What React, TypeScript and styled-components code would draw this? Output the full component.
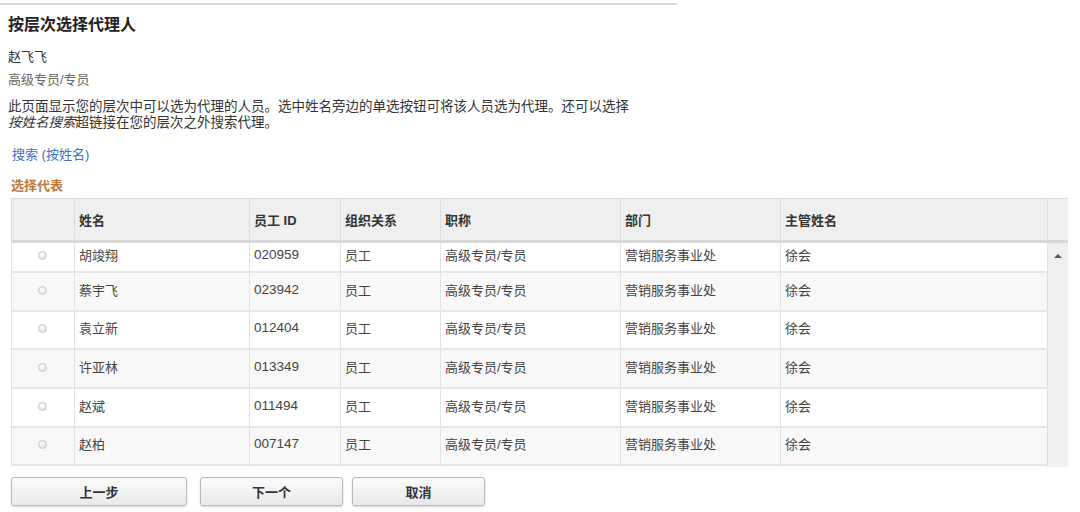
import React from "react";
import styled, { createGlobalStyle } from "styled-components";

const Global = createGlobalStyle`
  html, body { margin: 0; padding: 0; background: #fff; }
  body {
    font-family: "Liberation Sans", Arial, "Noto Sans CJK SC", sans-serif;
    color: #333;
    font-size: 13px;
  }
`;

const Page = styled.div`
  width: 1080px;
  height: 512px;
  overflow: hidden;
`;

const TopRule = styled.div`
  width: 677px;
  height: 2px;
  margin-top: 3px;
  background: #d9d9d9;
`;

const Content = styled.div`
  padding: 0 0 0 8px;
`;

const Title = styled.h1`
  margin: 10px 0 0 0;
  font-size: 16px;
  font-weight: bold;
  color: #222;
  line-height: 20px;
`;

const Line = styled.div<{ $gray?: boolean; $mt: number }>`
  margin-top: ${(p) => p.$mt}px;
  font-size: 13px;
  line-height: 16px;
  color: ${(p) => (p.$gray ? "#666" : "#333")};
`;

const Para = styled.p`
  margin: 11px 0 0 0;
  font-size: 13.5px;
  line-height: 16px;
  color: #333;
`;

const Em = styled.i`
  font-style: italic;
  font-weight: normal;
`;

const Link = styled.a`
  display: inline-block;
  margin: 16px 0 0 4px;
  font-size: 13px;
  line-height: 16px;
  color: #3f6fc6;
  text-decoration: none;
`;

const Legend = styled.div`
  margin: 16px 0 0 3px;
  font-size: 13px;
  font-weight: bold;
  line-height: 14px;
  color: #c0763a;
`;

const GridWrap = styled.div`
  margin: 5px 0 0 3px;
  width: 1057px;
  height: 269px;
  overflow: hidden;
`;

const Table = styled.table`
  border-collapse: collapse;
  table-layout: fixed;
  width: 1057px;
`;

const Th = styled.th`
  height: 41px;
  padding: 0 0 0 4px;
  text-align: left;
  font-size: 13px;
  font-weight: bold;
  color: #333;
  background: #efefef;
  border: 1px solid #dcdcdc;
  border-bottom: 3px solid #d6d6d6;
`;

const Tr = styled.tr<{ $alt: boolean; $h: number }>`
  height: ${(p) => p.$h}px;
  background: ${(p) => (p.$alt ? "#f8f8f8" : "#fff")};
`;

const Td = styled.td<{ $num?: boolean }>`
  padding: 0 0 4px 4px;
  font-size: ${(p) => (p.$num ? "13.5px" : "13px")};
  color: #444;
  border: 1px solid #e2e2e2;
  border-top: 2px solid #e6e6e6;
  white-space: nowrap;
  overflow: hidden;
`;

const RadioCell = styled(Td)`
  padding: 0 0 4px 0;
  text-align: center;
`;

const Radio = styled.span`
  display: inline-block;
  width: 7px;
  height: 7px;
  border-radius: 50%;
  border: 1px solid #c9c9c9;
  background: radial-gradient(circle at 40% 35%, #fff 0%, #e2e2e2 70%, #d2d2d2 100%);
  vertical-align: middle;
  margin-right: 2px;
`;

const ScrollCell = styled.td`
  background: #efefef;
  border-left: 1px solid #dcdcdc;
  border-right: 1px solid #e8e8e8;
  vertical-align: top;
  padding: 0;
  text-align: center;
`;

const Arrow = styled.div`
  margin: 11px auto 0 auto;
  width: 0;
  height: 0;
  border-left: 4px solid transparent;
  border-right: 4px solid transparent;
  border-bottom: 4px solid #555;
`;

const Buttons = styled.div`
  display: flex;
  margin: 10px 0 0 3px;
`;

const Btn = styled.button<{ $w: number; $ml: number }>`
  width: ${(p) => p.$w}px;
  margin-left: ${(p) => p.$ml}px;
  height: 29px;
  border: 1px solid #b9b9b9;
  border-radius: 3px;
  background: linear-gradient(#fbfbfb, #e9e9e9);
  box-shadow: 0 1px 2px rgba(0, 0, 0, 0.18);
  font-family: "Liberation Sans", Arial, "Noto Sans CJK SC", sans-serif;
  font-size: 13px;
  font-weight: bold;
  color: #333;
  padding: 0;
`;

const rows = [
  ["胡竣翔", "020959"],
  ["蔡宇飞", "023942"],
  ["袁立新", "012404"],
  ["许亚林", "013349"],
  ["赵斌", "011494"],
  ["赵柏", "007147"],
];
const heights = [30, 39, 38, 39, 39, 38];

export default function App() {
  return (
    <Page>
      <Global />
      <TopRule />
      <Content>
        <Title>按层次选择代理人</Title>
        <Line $mt={14}>赵飞飞</Line>
        <Line $mt={7} $gray>高级专员/专员</Line>
        <Para>
          此页面显示您的层次中可以选为代理的人员。选中姓名旁边的单选按钮可将该人员选为代理。还可以选择
          <br />
          <Em>按姓名搜索</Em>超链接在您的层次之外搜索代理。
        </Para>
        <Link href="#">搜索 (按姓名)</Link>
        <Legend>选择代表</Legend>
        <GridWrap>
          <Table>
            <colgroup>
              <col style={{ width: 63 }} />
              <col style={{ width: 175 }} />
              <col style={{ width: 91 }} />
              <col style={{ width: 100 }} />
              <col style={{ width: 180 }} />
              <col style={{ width: 160 }} />
              <col style={{ width: 267 }} />
              <col style={{ width: 21 }} />
            </colgroup>
            <thead>
              <tr>
                <Th />
                <Th>姓名</Th>
                <Th>员工 ID</Th>
                <Th>组织关系</Th>
                <Th>职称</Th>
                <Th>部门</Th>
                <Th>主管姓名</Th>
                <Th />
              </tr>
            </thead>
            <tbody>
              {rows.map(([name, id], i) => (
                <Tr key={id} $alt={i % 2 === 1} $h={heights[i]}>
                  <RadioCell>
                    <Radio />
                  </RadioCell>
                  <Td>{name}</Td>
                  <Td $num>{id}</Td>
                  <Td>员工</Td>
                  <Td>高级专员/专员</Td>
                  <Td>营销服务事业处</Td>
                  <Td>徐会</Td>
                  {i === 0 && (
                    <ScrollCell rowSpan={7}>
                      <Arrow />
                    </ScrollCell>
                  )}
                </Tr>
              ))}
              <Tr $alt={false} $h={38}>
                <RadioCell />
                <Td />
                <Td />
                <Td />
                <Td />
                <Td />
                <Td />
              </Tr>
            </tbody>
          </Table>
        </GridWrap>
        <Buttons>
          <Btn $w={176} $ml={0}>上一步</Btn>
          <Btn $w={143} $ml={13}>下一个</Btn>
          <Btn $w={133} $ml={9}>取消</Btn>
        </Buttons>
      </Content>
    </Page>
  );
}
